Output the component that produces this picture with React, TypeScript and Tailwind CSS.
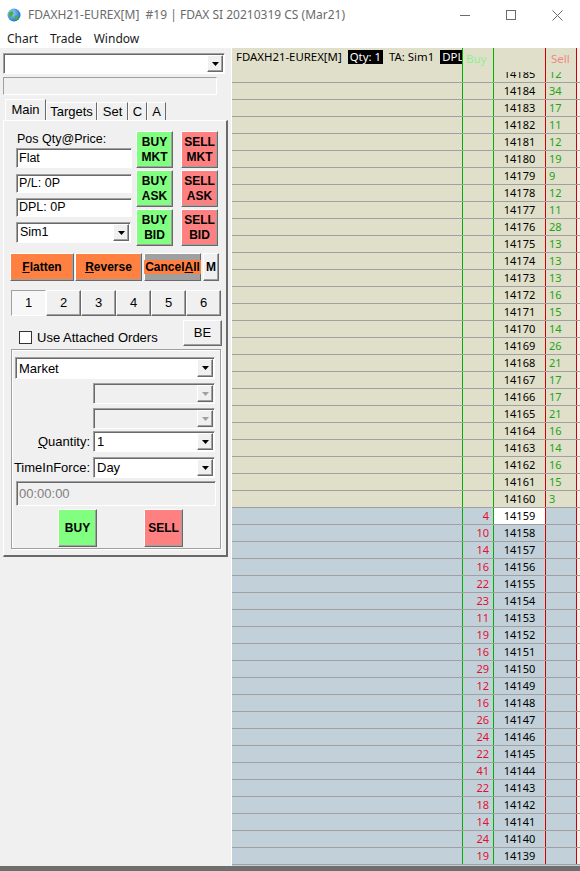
import React from 'react';

// Windows classic 3D borders
const raised =
  'border border-t-white border-l-white border-b-[#696969] border-r-[#696969] shadow-[inset_-1px_-1px_0_#a0a0a0]';
const sunken =
  'border border-t-[#a0a0a0] border-l-[#a0a0a0] border-b-white border-r-white shadow-[inset_1px_1px_0_#696969]';

const asks = [12, 34, 17, 11, 12, 19, 9, 12, 11, 28, 13, 13, 13, 16, 15, 14, 26, 21, 17, 17, 21, 16, 14, 16, 15, 3];
const bids = [4, 10, 14, 16, 22, 23, 11, 19, 16, 29, 12, 16, 26, 24, 22, 41, 22, 18, 14, 24, 19];

const ladder = [
  ...asks.map((s, i) => ({ price: 14185 - i, buy: null as number | null, sell: s as number | null })),
  ...bids.map((b, i) => ({ price: 14159 - i, buy: b as number | null, sell: null as number | null })),
];

const Arrow = ({ disabled }: { disabled?: boolean }) => (
  <div className={`w-[16px] h-full flex items-center justify-center bg-[#f0f0f0] ${raised}`}>
    <svg width="7" height="4" viewBox="0 0 7 4">
      <path d="M0 0h7L3.5 4z" fill={disabled ? '#a0a0a0' : '#000'} />
    </svg>
  </div>
);

const Select = ({ value, className, disabled }: { value?: string; className: string; disabled?: boolean }) => (
  <div className={`flex items-stretch p-[1px] ${disabled ? 'bg-[#f0f0f0]' : 'bg-white'} ${sunken} ${className}`}>
    <div className="flex-1 pl-[2px] flex items-center leading-none">{value}</div>
    <Arrow disabled={disabled} />
  </div>
);

const Field = ({ value, className }: { value: string; className: string }) => (
  <div className={`bg-white pl-[2px] flex items-center ${sunken} ${className}`}>{value}</div>
);

const TradeBtn = ({ top, bottom, buy }: { top: string; bottom: string; buy?: boolean }) => (
  <div
    className={`w-[37px] h-[37px] flex flex-col items-center justify-center font-bold leading-[15px] ${raised} ${
      buy ? 'bg-[#80ff80]' : 'bg-[#ff8080]'
    }`}
  >
    <span>{top}</span>
    <span>{bottom}</span>
  </div>
);

function Row({ price, buy, sell }: { price: number; buy: number | null; sell: number | null }) {
  const bid = price <= 14159;
  return (
    <div className={`flex h-[17px] border-b border-[#a0a0a0] leading-[16px] ${bid ? 'bg-[#c2d1d9]' : 'bg-[#e0dfc9]'}`}>
      <div className="w-[230px]" />
      <div className="w-[31px] border-l border-[#00b000] text-right pr-[4px] text-[#e2102e]">{buy}</div>
      <div className={`w-[52px] border-l border-[#00b000] text-center text-black ${price === 14159 ? 'bg-white' : ''}`}>
        {price}
      </div>
      <div className="w-[31px] border-l border-[#d00000] pl-[3px] text-[#1fa31f]">{sell}</div>
      <div className="w-[4px] border-l border-[#d00000] bg-[#f0f0f0]" />
    </div>
  );
}

function HeaderRow({ price, sell }: { price: number; sell: number }) {
  return (
    <div className="flex h-[35px] border-b border-[#a0a0a0] bg-[#e0dfc9] leading-[16px]">
      <div className="w-[230px] pl-[4px] pt-[2px] whitespace-nowrap overflow-hidden flex items-start text-[11.4px] leading-[14px]">
        <span>FDAXH21-EUREX[M]</span>
        <span className="ml-[6px] bg-black text-white px-[2px]">Qty: 1</span>
        <span className="ml-[6px]">TA: Sim1</span>
        <span className="ml-[6px] bg-black text-white px-[2px]">DPL:</span>
      </div>
      <div className="w-[31px] border-l border-[#00b000] flex flex-col">
        <div className="h-[24px] pl-[3px] pt-[3px] text-[11.5px] text-[#90f090]">Buy</div>
      </div>
      <div className="w-[52px] border-l border-[#00b000] flex flex-col">
        <div className="h-[24px]" />
        <div className="h-[10px] overflow-hidden">
          <div className="-mt-[6px] text-center">{price}</div>
        </div>
      </div>
      <div className="w-[31px] border-l border-[#d00000] flex flex-col">
        <div className="h-[24px] pl-[5px] pt-[3px] text-[11.5px] text-[#f08888]">Sell</div>
        <div className="h-[10px] overflow-hidden">
          <div className="-mt-[6px] pl-[3px] text-[#1fa31f]">{sell}</div>
        </div>
      </div>
      <div className="w-[4px] border-l border-[#d00000] bg-[#f0f0f0]" />
    </div>
  );
}

function LeftPanel() {
  return (
    <div className="w-[232px] bg-[#f0f0f0] flex flex-col pt-[5px] pl-[3px] text-[12px] text-black font-['Liberation_Sans',Arial,sans-serif] border-r border-white">
      <Select className="w-[222px] h-[21px]" />
      <div className="mt-[3px] w-[214px] h-[18px] border border-t-[#a0a0a0] border-l-[#a0a0a0] border-b-white border-r-white" />

      {/* tabs */}
      <div className="mt-[4px] h-[21px] flex items-end pl-[2px] relative z-10">
        <div className="w-[41px] h-[21px] bg-[#f0f0f0] border-t border-l border-white border-r border-r-[#696969] flex items-center justify-center text-[13px]">
          Main
        </div>
        {[
          ['Targets', 'w-[51px]'],
          ['Set', 'w-[31px]'],
          ['C', 'w-[19px]'],
          ['A', 'w-[19px]'],
        ].map(([t, w]) => (
          <div
            key={t}
            className={`${w} h-[18px] border-t border-l border-white border-r border-r-[#696969] flex items-center justify-center text-[13px]`}
          >
            {t}
          </div>
        ))}
      </div>

      {/* tab page */}
      <div className="w-[225px] h-[437px] border-t border-l border-white border-b-2 border-r-2 border-b-[#696969] border-r-[#696969] flex flex-col">
        <div className="flex ml-[12px]">
          <div className="w-[116px] mt-[11px] flex flex-col">
            <div className="h-[16px] pl-[1px] leading-[14px] text-[12.5px]">Pos Qty@Price:</div>
            <Field value="Flat" className="h-[20px] text-[12.5px]" />
            <Field value="P/L: 0P" className="h-[19px] mt-[6px] text-[12.5px]" />
            <Field value="DPL: 0P" className="h-[19px] mt-[5px] text-[12.5px]" />
            <Select value="Sim1" className="h-[21px] mt-[5px] w-[115px] text-[12.5px]" />
          </div>
          <div className="ml-[4px] mt-[10px] flex flex-col gap-[2px]">
            <TradeBtn top="BUY" bottom="MKT" buy />
            <TradeBtn top="BUY" bottom="ASK" buy />
            <TradeBtn top="BUY" bottom="BID" buy />
          </div>
          <div className="ml-[8px] mt-[10px] flex flex-col gap-[2px]">
            <TradeBtn top="SELL" bottom="MKT" />
            <TradeBtn top="SELL" bottom="ASK" />
            <TradeBtn top="SELL" bottom="BID" />
          </div>
        </div>

        <div className="flex ml-[6px] mt-[7px] h-[28px] font-bold">
          <div className={`w-[64px] bg-[#ff8040] flex items-center justify-center ${raised}`}>
            <span><u>F</u>latten</span>
          </div>
          <div className={`w-[67px] ml-[1px] bg-[#ff8040] flex items-center justify-center ${raised}`}>
            <span><u>R</u>everse</span>
          </div>
          <div className={`w-[57px] ml-[2px] bg-[#a0a0a0] flex items-center justify-center ${raised}`}>
            <span className="bg-[#ff8040] px-[1px] leading-[14px]">Cancel<u>A</u>ll</span>
          </div>
          <div className={`w-[16px] ml-[2px] bg-[#f0f0f0] flex items-center justify-center ${raised}`}>M</div>
        </div>

        <div className="flex ml-[7px] mt-[9px] h-[26px] text-[13px]">
          {['1', '2', '3', '4', '5', '6'].map((n) => (
            <div
              key={n}
              className={`w-[35px] flex items-center justify-center ${
                n === '1'
                  ? 'bg-[#f7f7f7] border border-t-[#a0a0a0] border-l-[#a0a0a0] border-b-white border-r-white'
                  : `bg-[#f0f0f0] ${raised}`
              }`}
            >
              {n}
            </div>
          ))}
        </div>

        <div className="flex items-start justify-between ml-[15px] w-[203px] mt-[4px] h-[26px]">
          <div className="flex items-center mt-[8px]">
            <div className="w-[13px] h-[13px] bg-white border border-[#333]" />
            <span className="ml-[5px] text-[13px]">Use Attached Orders</span>
          </div>
          <div className={`w-[39px] h-[26px] bg-[#f0f0f0] flex items-center justify-center text-[13px] ${raised}`}>BE</div>
        </div>

        {/* order group */}
        <div className="ml-[7px] mt-[3px] w-[210px] h-[200px] border border-[#a0a0a0] shadow-[inset_1px_1px_0_#fff,1px_1px_0_#fff] flex flex-col">
          <Select value="Market" className="ml-[3px] mt-[7px] w-[200px] h-[22px] text-[13px]" />
          <Select disabled className="ml-[81px] mt-[4px] w-[122px] h-[21px]" />
          <Select disabled className="ml-[81px] mt-[4px] w-[122px] h-[21px]" />
          <div className="flex items-center mt-[2px] h-[21px]">
            <div className="w-[81px] text-right pr-[3px] text-[13px]">
              <u>Q</u>uantity:
            </div>
            <Select value="1" className="w-[122px] h-[21px] text-[13px]" />
          </div>
          <div className="flex items-center mt-[5px] h-[21px]">
            <div className="w-[81px] text-right pr-[3px] text-[13px] whitespace-nowrap">TimeInForce:</div>
            <Select value="Day" className="w-[122px] h-[21px] text-[13px]" />
          </div>
          <div className={`ml-[4px] mt-[3px] w-[200px] h-[25px] bg-[#f0f0f0] pl-[2px] flex items-center text-[13px] text-[#808080] ${sunken}`}>
            00:00:00
          </div>
          <div className="flex mt-[3px] ml-[46px] h-[38px] font-bold">
            <div className={`w-[39px] bg-[#80ff80] flex items-center justify-center ${raised}`}>BUY</div>
            <div className={`w-[39px] ml-[47px] bg-[#ff8080] flex items-center justify-center ${raised}`}>SELL</div>
          </div>
        </div>
      </div>
    </div>
  );
}

export default function App() {
  return (
    <div className="w-[580px] h-[871px] flex flex-col bg-white overflow-hidden font-['Noto_Sans','Open_Sans',sans-serif]">
      {/* title bar */}
      <div className="h-[30px] flex items-center bg-white">
        <svg className="ml-[7px]" width="14" height="14" viewBox="0 0 14 14">
          <defs>
            <radialGradient id="g" cx="0.35" cy="0.35" r="0.7">
              <stop offset="0" stopColor="#9fd8ff" />
              <stop offset="1" stopColor="#1d6fc4" />
            </radialGradient>
          </defs>
          <circle cx="7" cy="7" r="6.5" fill="url(#g)" />
          <path d="M3 4c1.5-1 3-1 3.5 0.5S5 7 4.5 8.5 2.5 9 2 7.5 2 5 3 4zM8 8c1-0.5 3 0 3.5 1S10 12 9 12s-1.5-2-1-4z" fill="#4caf3a" />
        </svg>
        <span className="ml-[7px] text-[12px] text-[#6b6b6b]">FDAXH21-EUREX[M]&nbsp; #19 | FDAX SI 20210319 CS (Mar21)</span>
        <div className="ml-auto flex items-center h-full">
          <div className="w-[46px] h-full flex items-center justify-center">
            <div className="w-[10px] h-[1px] bg-[#6b6b6b]" />
          </div>
          <div className="w-[46px] h-full flex items-center justify-center">
            <div className="w-[10px] h-[10px] border border-[#6b6b6b]" />
          </div>
          <div className="w-[46px] h-full flex items-center justify-center">
            <svg width="11" height="11" viewBox="0 0 11 11">
              <path d="M0.5 0.5l10 10M10.5 0.5l-10 10" stroke="#6b6b6b" strokeWidth="1" />
            </svg>
          </div>
        </div>
      </div>

      {/* menu */}
      <div className="h-[18px] flex items-center gap-[12px] pl-[7px] text-[12px] text-[#1a1a1a] bg-white">
        <span>Chart</span>
        <span>Trade</span>
        <span>Window</span>
      </div>

      <div className="h-[818px] flex">
        <LeftPanel />
        <div className="flex-1 flex flex-col text-[11px] text-black bg-[#c2d1d9]">
          <HeaderRow price={ladder[0].price} sell={ladder[0].sell as number} />
          {ladder.slice(1).map((r) => (
            <Row key={r.price} price={r.price} buy={r.buy} sell={r.sell} />
          ))}
        </div>
      </div>

      <div className="h-[5px] bg-[#6e6e6e]" />
    </div>
  );
}
